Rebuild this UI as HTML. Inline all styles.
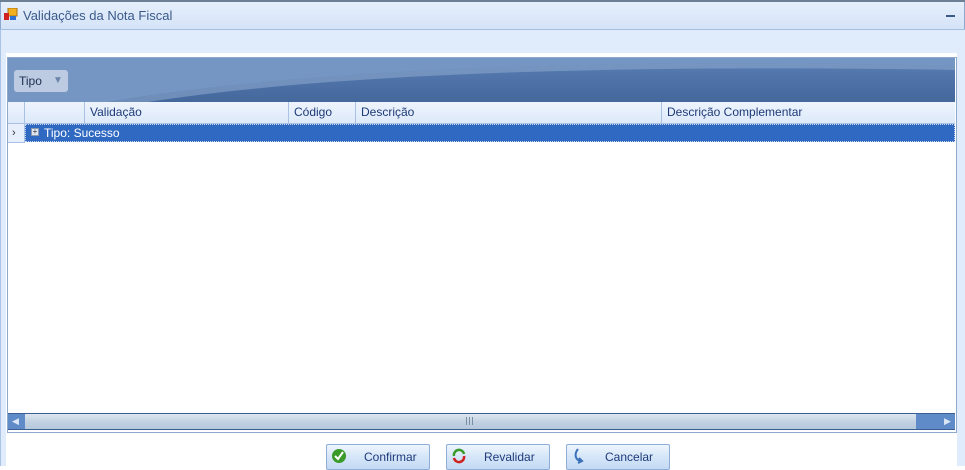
<!DOCTYPE html>
<html><head><meta charset="utf-8"><style>
*{margin:0;padding:0;box-sizing:border-box}
body{width:965px;height:466px;overflow:hidden;background:#fff;font-family:"Liberation Sans",sans-serif;font-size:12px;position:relative}
.a{position:absolute}
.col{position:absolute;top:0;height:21px;border-right:1px solid #a9c2e4;line-height:21px;padding-left:5px;color:#1d3a78}
.btn{position:absolute;top:444px;width:104px;height:26px;border:1px solid #8eaed8;border-radius:2px;background:linear-gradient(#eef5fd,#d5e6f8 50%,#c3daf4);color:#1e3a7a;font-size:12px;line-height:22px}
</style></head><body>
<div class="a" style="left:0;top:0;width:965px;height:2px;background:#6b7f95"></div>
<div class="a" style="left:0;top:2px;width:965px;height:28px;background:linear-gradient(#e6effb,#d4e3f7);border-left:1px solid #8aa8d0;border-right:1px solid #8aa8d0"></div>
<svg class="a" style="left:4px;top:8px" width="14" height="13"><rect x="4" y="0" width="9" height="8" fill="#f0b020" stroke="#b07010"/><rect x="0" y="5" width="5" height="7" fill="#d02020"/><rect x="6" y="8" width="6" height="4" fill="#3070d0"/></svg>
<div class="a" style="left:23px;top:8px;color:#3a5a8a;font-size:13px">Validações da Nota Fiscal</div>
<div class="a" style="left:946px;top:15px;width:9px;height:2px;background:#3a5a8a"></div>
<div class="a" style="left:0;top:29px;width:965px;height:1px;background:#a3bee0"></div>
<div class="a" style="left:0;top:30px;width:965px;height:436px;background:#e0ecfb;border-left:1px solid #aac4e6"></div>
<div class="a" style="left:6px;top:53px;width:951px;height:413px;background:#fff"></div>
<div class="a" style="left:7px;top:57px;width:950px;height:376px;border:1px solid #8fa9cc;background:#fff"></div>
<div class="a" style="left:8px;top:58px;width:947px;height:44px;background:linear-gradient(#5a7fb5,#44679c);overflow:hidden">
<svg width="947" height="44" style="position:absolute;left:0;top:0"><path d="M0 0 H947 V8 C600 0 300 10 100 44 H0 Z" fill="#7595c2"/><path d="M100 44 C300 10 600 0 947 8 V12 C600 6 320 16 140 44 Z" fill="#8aa6cc" opacity=".6"/></svg>
<div class="a" style="left:6px;top:12px;width:54px;height:22px;background:#bccbe1;border-radius:3px;line-height:22px;padding-left:5px;color:#1d2f50">Tipo<span style="position:absolute;left:39px;color:#6b84a8;font-size:10px">▼</span></div>
</div>
<div class="a" style="left:8px;top:102px;width:947px;height:22px;background:linear-gradient(#eef4fd,#dde9fa);border-bottom:1px solid #a9c2e4">
<div class="col" style="left:0;width:17px;padding:0"></div>
<div class="col" style="left:17px;width:60px"></div>
<div class="col" style="left:77px;width:204px">Validação</div>
<div class="col" style="left:281px;width:67px">Código</div>
<div class="col" style="left:348px;width:306px">Descrição</div>
<div class="col" style="left:654px;width:293px;border:none">Descrição Complementar</div>
</div>
<div class="a" style="left:8px;top:124px;width:17px;height:19px;background:#e6effb;border-right:1px solid #a9c2e4;border-bottom:1px solid #a9c2e4;color:#333;line-height:18px;padding-left:4px;font-size:11px">›</div>
<div class="a" style="left:25px;top:124px;width:930px;height:18px;background:#3069c2;border:1px dotted #c8d8f0;color:#fff;line-height:16px;padding-left:18px">Tipo: Sucesso</div>
<div class="a" style="left:31px;top:128px;width:8px;height:8px;background:#dfe6f0;border:1px solid #8a9ab0;font-size:8px;line-height:6px;text-align:center;color:#333">+</div>
<div class="a" style="left:8px;top:413px;width:947px;height:17px;border-top:1px solid #3c5f93;border-bottom:1px solid #3c5f93;background:linear-gradient(#dde6ef,#c3d2e2 50%,#b5c8dc)"></div>
<div class="a" style="left:8px;top:414px;width:17px;height:15px;background:#5f8cc8;color:#dbe7f7;font-size:9px;line-height:15px;padding-left:4px">◀</div>
<div class="a" style="left:916px;top:414px;width:39px;height:15px;background:#5f8cc8;color:#dbe7f7;font-size:9px;line-height:15px;padding-left:28px">▶</div>
<div class="a" style="left:466px;top:417px;width:7px;height:8px;border-left:1px solid #7a8ea8;border-right:1px solid #7a8ea8"><div style="margin-left:2px;width:1px;height:8px;background:#7a8ea8"></div></div>
<div class="btn" style="left:326px"><svg class="a" style="left:4px;top:3px" width="16" height="16"><circle cx="8" cy="8" r="7" fill="#3a9a2a"/><path d="M4 8 L7 11 L12 4" stroke="#fff" stroke-width="2" fill="none"/></svg><span class="a" style="left:37px;top:1px">Confirmar</span></div>
<div class="btn" style="left:446px"><svg class="a" style="left:4px;top:3px" width="16" height="16"><path d="M3 8 A5 5 0 0 1 13 6" stroke="#3a9a2a" stroke-width="2.5" fill="none"/><path d="M13 8 A5 5 0 0 1 3 10" stroke="#d02020" stroke-width="2.5" fill="none"/></svg><span class="a" style="left:37px;top:1px">Revalidar</span></div>
<div class="btn" style="left:566px"><svg class="a" style="left:4px;top:3px" width="16" height="16"><path d="M7 1 C3 6 4 12 10 13" stroke="#3a70b8" stroke-width="2" fill="none"/><path d="M8 10 L11 13 L7 15" stroke="#3a70b8" stroke-width="2" fill="none"/></svg><span class="a" style="left:38px;top:1px">Cancelar</span></div>
</body></html>
